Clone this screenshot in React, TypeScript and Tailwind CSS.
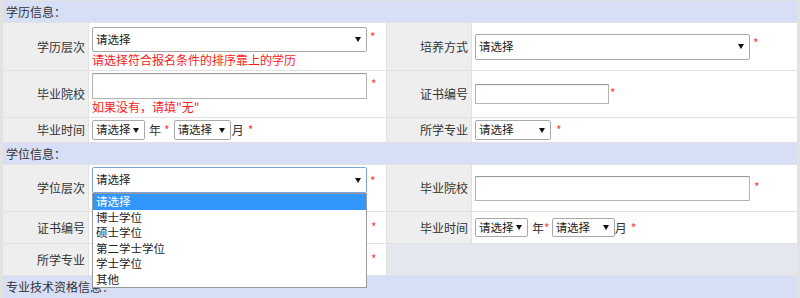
import React from "react";

function Arrow() {
  return (
    <svg width="6" height="5" viewBox="0 0 6 5" className="shrink-0">
      <path d="M0 0h6L3 5z" fill="#111" />
    </svg>
  );
}

function Sel({ cls, focus, empty }: { cls: string; focus?: boolean; empty?: boolean }) {
  return (
    <div
      className={`${cls} shrink-0 box-border flex items-center justify-between whitespace-nowrap border ${
        focus ? "border-[#7aa3dc]" : "border-[#a9a9a9]"
      } rounded-[2px] bg-white pl-[3px] pr-[5px] text-[11.5px] leading-none text-[#222]`}
    >
      <span>{empty ? "" : "请选择"}</span>
      <Arrow />
    </div>
  );
}

function Inp({ cls }: { cls: string }) {
  return (
    <div
      className={`${cls} shrink-0 box-border border border-[#b4b4b4] border-t-[#9c9c9c] rounded-[1px] bg-white shadow-[inset_0_1px_1px_rgba(0,0,0,0.06)]`}
    />
  );
}

function Star({ cls = "" }: { cls?: string }) {
  return <span className={`${cls} text-[12px] leading-none text-[#ff3b3b] self-start`}>*</span>;
}

function Label({ children }: { children: React.ReactNode }) {
  return (
    <div className="flex items-center justify-end bg-[#eeeeee] pr-[3px] text-[12px] text-[#333]">
      {children}
    </div>
  );
}

function Header({ children }: { children: React.ReactNode }) {
  return (
    <div className="col-span-4 flex items-center bg-[#d6dff6] pl-[3px] text-[12px] text-[#333]">
      {children}
    </div>
  );
}

export default function App() {
  const items = ["请选择", "博士学位", "硕士学位", "第二学士学位", "学士学位", "其他"];
  return (
    <div className="h-[298px] w-[800px] overflow-hidden bg-[#e2e2e2] pt-px pl-[3px] pr-[3px] font-['Microsoft_YaHei','Noto_Sans_CJK_SC','Noto_Sans',sans-serif]">
      <div className="grid grid-cols-[85px_297px_84px_325px] grid-rows-[21px_47px_46px_24px_21px_46px_31px_31px_22px] gap-px">
        <Header>学历信息：</Header>

        {/* row 1 */}
        <Label>学历层次</Label>
        <div className="flex flex-col bg-white pl-[3px] pt-[4px]">
          <div className="flex">
            <Sel cls="w-[275px] h-[25px]" />
            <Star cls="ml-[3px] mt-[4px]" />
          </div>
          <div className="mt-[1px] text-[12px] leading-[14px] text-[#ff1a1a]">请选择符合报名条件的排序靠上的学历</div>
        </div>
        <Label>培养方式</Label>
        <div className="flex items-center bg-white pl-[3px]">
          <div className="flex">
            <Sel cls="w-[275px] h-[26px]" />
            <Star cls="ml-[3px] mt-[3px]" />
          </div>
        </div>

        {/* row 2 */}
        <Label>毕业院校</Label>
        <div className="flex flex-col bg-white pl-[3px] pt-[2px]">
          <div className="flex">
            <Inp cls="w-[275px] h-[26px]" />
            <Star cls="ml-[4px] mt-[5px]" />
          </div>
          <div className="mt-[1px] text-[12px] leading-[14px] text-[#ff1a1a]">如果没有，请填"无"</div>
        </div>
        <Label>证书编号</Label>
        <div className="flex items-center bg-white pl-[3px]">
          <div className="flex">
            <Inp cls="w-[134px] h-[20px]" />
            <Star cls="ml-[1px] mt-[3px]" />
          </div>
        </div>

        {/* row 3 */}
        <Label>毕业时间</Label>
        <div className="flex items-center bg-white pl-[3px] text-[12px] text-[#333]">
          <Sel cls="w-[53px] h-[20px]" />
          <span className="ml-[4px]">年</span>
          <span className="ml-[3px] text-[#ff3b3b]">*</span>
          <Sel cls="ml-[4px] w-[57px] h-[20px]" />
          <span className="ml-[1px]">月</span>
          <span className="ml-[4px] text-[#ff3b3b]">*</span>
        </div>
        <Label>所学专业</Label>
        <div className="flex items-center bg-white pl-[3px] text-[12px]">
          <Sel cls="w-[76px] h-[20px]" />
          <span className="ml-[5px] text-[#ff3b3b]">*</span>
        </div>

        <Header>学位信息：</Header>

        {/* row 4 */}
        <Label>学位层次</Label>
        <div className="flex bg-white pl-[3px] pt-[2px]">
          <div className="relative z-10">
            <Sel cls="w-[275px] h-[26px]" focus />
            <div className="absolute left-0 top-[26px] w-[275px] border border-[#9a9a9a] bg-white text-[11.5px] text-[#222]">
              {items.map((t, i) => (
                <div
                  key={t}
                  className={`h-[15.5px] pl-[3px] leading-[15.5px] ${i === 0 ? "bg-[#3297fd] text-white" : ""}`}
                >
                  {t}
                </div>
              ))}
            </div>
          </div>
          <Star cls="ml-[3px] mt-[8px]" />
        </div>
        <Label>毕业院校</Label>
        <div className="flex items-center bg-white pl-[3px]">
          <div className="flex">
            <Inp cls="w-[275px] h-[25px]" />
            <Star cls="ml-[4px] mt-[5px]" />
          </div>
        </div>

        {/* row 5 */}
        <Label>证书编号</Label>
        <div className="flex items-center bg-white pl-[3px]">
          <div className="flex">
            <Inp cls="w-[275px] h-[22px]" />
            <Star cls="ml-[4px] mt-[4px]" />
          </div>
        </div>
        <Label>毕业时间</Label>
        <div className="flex items-center bg-white pl-[3px] text-[12px] text-[#333]">
          <Sel cls="w-[53px] h-[19px]" />
          <span className="ml-[4px]">年</span>
          <span className="text-[#ff3b3b]">*</span>
          <Sel cls="ml-[2px] w-[63px] h-[19px]" />
          <span>月</span>
          <span className="ml-[4px] text-[#ff3b3b]">*</span>
        </div>

        {/* row 6 */}
        <Label>所学专业</Label>
        <div className="flex items-center bg-white pl-[3px]">
          <div className="flex">
            <Sel cls="w-[275px] h-[22px]" empty />
            <Star cls="ml-[4px] mt-[4px]" />
          </div>
        </div>
        <div className="col-span-2 bg-[#e4e7ee]" />

        <Header>专业技术资格信息：</Header>
      </div>
    </div>
  );
}
